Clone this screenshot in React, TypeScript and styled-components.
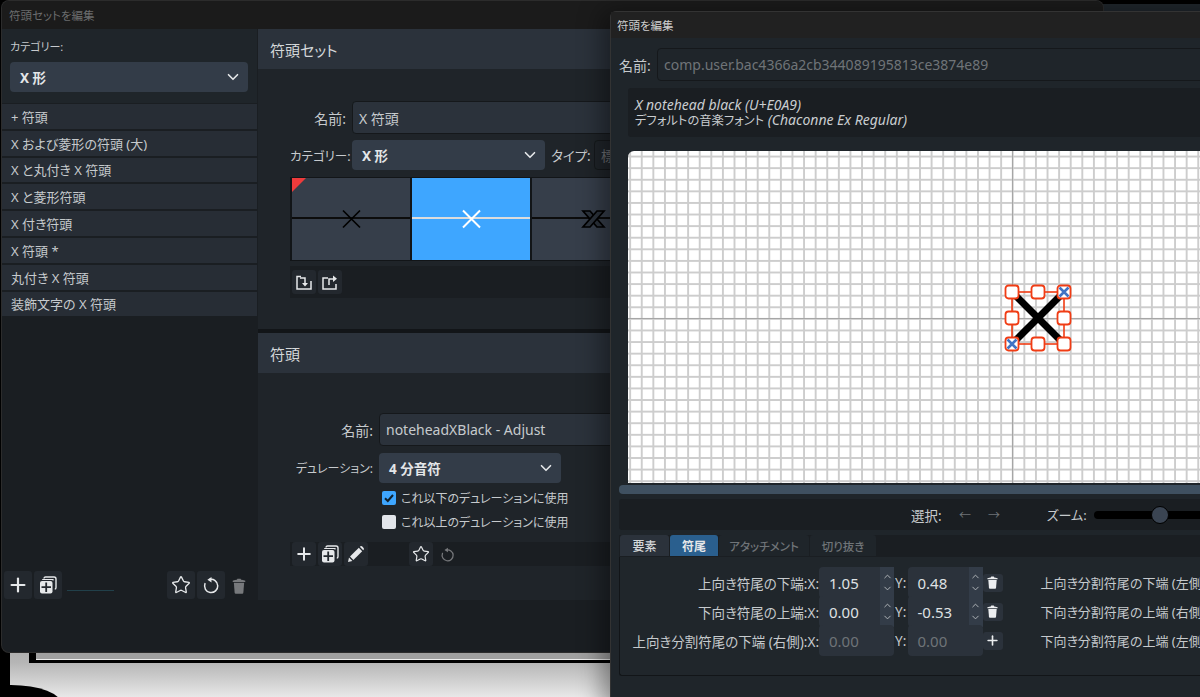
import React from "react";
import styled, { createGlobalStyle } from "styled-components";
import { ChevronDown, ChevronUp, Plus, Star } from "lucide-react";

const GlobalStyle = createGlobalStyle`
  html, body {
    margin: 0;
    background: #000;
    overflow: hidden;
  }
  * {
    box-sizing: border-box;
  }
`;

const categories = [
  "+ 符頭",
  "X および菱形の符頭 (大)",
  "X と丸付き X 符頭",
  "X と菱形符頭",
  "X 付き符頭",
  "X 符頭 *",
  "丸付き X 符頭",
  "装飾文字の X 符頭",
];

const stemRows = [
  { label: "上向き符尾の下端:", x: "1.05", y: "0.48", side: "上向き分割符尾の下端 (左側):", active: true },
  { label: "下向き符尾の上端:", x: "0.00", y: "-0.53", side: "下向き分割符尾の上端 (右側):", active: true },
  { label: "上向き分割符尾の下端 (右側):", x: "0.00", y: "0.00", side: "下向き分割符尾の上端 (左側):", active: false },
];

const TrashIcon = ({ size = 14 }: { size?: number }) => (
  <svg width={size} height={size} viewBox="0 0 14 14" fill="currentColor">
    <path d="M1.5 2.4 C3 1.7 4.5 1.6 5.2 1.5 L5.6 .6 H8.4 L8.8 1.5 C9.5 1.6 11 1.7 12.5 2.4 V3.4 H1.5 Z" />
    <path d="M2.5 4.2 H11.5 L10.8 13 C10.7 13.6 10.4 13.8 9.9 13.8 H4.1 C3.6 13.8 3.3 13.6 3.2 13 Z" />
  </svg>
);

const AddCopyIcon = () => (
  <svg width="18" height="18" viewBox="0 0 18 18" fill="none" stroke="currentColor">
    <path d="M5 2.5 C5 1.5 5.5 1 6.5 1 H15 C16 1 17 2 17 3 V11.5 C17 12.5 16.5 13 15.8 13" strokeWidth="1.4" />
    <path d="M3.2 3.5 H14 V4.5" strokeWidth="1.2" />
    <rect x="1" y="5" width="12.5" height="12.5" rx="2" fill="currentColor" stroke="none" />
    <path d="M7.2 6.5 V16 M2.5 11.2 H12" stroke="#23282e" strokeWidth="1.8" />
  </svg>
);

const UndoIcon = ({ size = 18 }: { size?: number }) => (
  <svg width={size} height={size} viewBox="0 0 18 18" fill="none" stroke="currentColor" strokeWidth="1.5">
    <path d="M7.5 3.6 A6.6 6.6 0 1 1 3 7.6" strokeLinecap="round" />
    <path d="M9.5 .9 L5.4 3.7 L9.5 6.4 Z" fill="currentColor" stroke="none" />
  </svg>
);

const ImportIcon = () => (
  <svg width="16" height="16" viewBox="0 0 16 16" fill="none" stroke="currentColor" strokeWidth="1.5">
    <path d="M5 2.5 H1 V15 H15 V7" />
    <path d="M4 4 H9 V10" />
    <path d="M6 9 L9 12.5 L12 9 Z" fill="currentColor" stroke="none" />
  </svg>
);

const ExportIcon = () => (
  <svg width="16" height="16" viewBox="0 0 16 16" fill="none" stroke="currentColor" strokeWidth="1.5">
    <path d="M6 4 H1 V15 H14 V10" />
    <path d="M7 11 V5 H12" />
    <path d="M11 1.5 L15 4.8 L11 8 Z" fill="currentColor" stroke="none" />
  </svg>
);

const PencilIcon = () => (
  <svg width="18" height="18" viewBox="0 0 18 18" fill="currentColor">
    <path d="M1 17 L2 12.6 L5.4 16 Z" />
    <path d="M3 11.6 L11.8 2.8 L15.2 6.2 L6.4 15 Z" />
    <path d="M12.8 1.8 C13.8 .8 14.6 .8 15.6 1.8 L16.2 2.4 C17.2 3.4 17.2 4.2 16.2 5.2 Z" />
  </svg>
);

const NoteCell = ({ selected, double }: { selected?: boolean; double?: boolean }) => {
  const ink = selected ? "#fff" : "#000";
  return (
    <svg width="100%" height="100%" viewBox="0 0 118 82">
      <rect x="0" y="39" width="118" height="2" fill={selected ? "#dcdcdc" : "#0c0c0c"} />
      {double ? (
        <g fill="#2b323b" stroke={ink} strokeWidth="1.7">
          <path d="M51 33 H58 L72 49 H65 Z" />
          <path d="M72 33 H65 L51 49 H58 Z" />
        </g>
      ) : (
        <path d="M51 32.5 L68 49.5 M68 32.5 L51 49.5" stroke={ink} strokeWidth={selected ? 2 : 1.7} />
      )}
    </svg>
  );
};

const GlyphHandles = () => {
  const handles = [
    [10, 10],
    [36, 10],
    [62, 10],
    [10, 36],
    [62, 36],
    [10, 62],
    [36, 62],
    [62, 62],
  ];
  return (
    <svg width="72" height="72" viewBox="0 0 72 72">
      <rect x="10" y="10" width="52" height="52" fill="none" stroke="#f03c14" strokeWidth="1.6" />
      <path d="M12 12 L60 60 M60 12 L12 60" stroke="#000" strokeWidth="7" />
      {handles.map(([x, y]) => (
        <rect key={`${x}-${y}`} x={x - 6.5} y={y - 6.5} width="13" height="13" rx="3" fill="#fff" stroke="#f03c14" strokeWidth="1.8" />
      ))}
      <path d="M57.5 5.5 L66.5 14.5 M66.5 5.5 L57.5 14.5 M5.5 57.5 L14.5 66.5 M14.5 57.5 L5.5 66.5" stroke="#3f73c4" strokeWidth="2.6" />
    </svg>
  );
};

export default function App() {
  return (
    <Desktop>
      <GlobalStyle />
      <ScorePage>
        <ScoreFrame />
        <ScoreBlob />
      </ScorePage>
      <FarWindow />

      <BackWindow>
        <BackTitle>符頭セットを編集</BackTitle>
        <BackBody>
          <Sidebar>
            <CategoryBox>
              <SidebarLabel>カテゴリー:</SidebarLabel>
              <Select $width={238}>
                X 形
                <ChevronDown size={18} strokeWidth={2.2} />
              </Select>
            </CategoryBox>
            <CategoryList>
              {categories.map((c) => (
                <CategoryRow key={c}>{c}</CategoryRow>
              ))}
            </CategoryList>
            <SidebarTools>
              <ToolButton $size={28}>
                <Plus size={22} strokeWidth={2.4} />
              </ToolButton>
              <ToolButton $size={28}>
                <AddCopyIcon />
              </ToolButton>
              <ProgressStub />
              <ToolButton $size={28}>
                <Star size={20} strokeWidth={1.6} />
              </ToolButton>
              <ToolButton $size={28}>
                <UndoIcon />
              </ToolButton>
              <MutedIcon>
                <TrashIcon size={16} />
              </MutedIcon>
            </SidebarTools>
          </Sidebar>

          <MainColumn>
            <Panel $height={300}>
              <PanelHeader>符頭セット</PanelHeader>
              <SetBody>
                <FormRow>
                  <FieldLabel $width={56}>名前:</FieldLabel>
                  <TextField>X 符頭</TextField>
                </FormRow>
                <FormRow>
                  <FieldLabel $width={56} $size={12.5}>カテゴリー:</FieldLabel>
                  <Select $width={193}>
                    X 形
                    <ChevronDown size={18} strokeWidth={2.2} />
                  </Select>
                  <TypeLabel>タイプ:</TypeLabel>
                  <TypeField>標準</TypeField>
                </FormRow>
                <CellStrip>
                  <Cell>
                    <CornerFlag />
                    <NoteCell />
                  </Cell>
                  <Cell $selected>
                    <NoteCell selected />
                  </Cell>
                  <Cell>
                    <NoteCell double />
                  </Cell>
                </CellStrip>
                <StripTools>
                  <ToolButton $size={24}>
                    <ImportIcon />
                  </ToolButton>
                  <ToolButton $size={24}>
                    <ExportIcon />
                  </ToolButton>
                </StripTools>
              </SetBody>
            </Panel>
            <Panel $height={267}>
              <PanelHeader>符頭</PanelHeader>
              <HeadBody>
                <FormRow>
                  <FieldLabel $width={83}>名前:</FieldLabel>
                  <TextField>noteheadXBlack - Adjust</TextField>
                </FormRow>
                <FormRow>
                  <FieldLabel $width={83} $size={12}>デュレーション:</FieldLabel>
                  <Select $width={182}>
                    4 分音符
                    <ChevronDown size={18} strokeWidth={2.2} />
                  </Select>
                </FormRow>
                <CheckList>
                  <CheckRow>
                    <CheckBox $checked>
                      <svg width="12" height="12" viewBox="0 0 12 12" fill="none" stroke="#10202c" strokeWidth="2">
                        <path d="M2 6.2 L4.8 9 L10 3" />
                      </svg>
                    </CheckBox>
                    これ以下のデュレーションに使用
                  </CheckRow>
                  <CheckRow>
                    <CheckBox />
                    これ以上のデュレーションに使用
                  </CheckRow>
                </CheckList>
                <HeadTools>
                  <ToolButton $size={24}>
                    <Plus size={20} strokeWidth={2.4} />
                  </ToolButton>
                  <ToolButton $size={24}>
                    <AddCopyIcon />
                  </ToolButton>
                  <ToolButton $size={24}>
                    <PencilIcon />
                  </ToolButton>
                  <ToolSpacer />
                  <ToolButton $size={24}>
                    <Star size={18} strokeWidth={1.6} />
                  </ToolButton>
                  <MutedIcon>
                    <UndoIcon size={15} />
                  </MutedIcon>
                </HeadTools>
              </HeadBody>
            </Panel>
          </MainColumn>
        </BackBody>
      </BackWindow>

      <EditWindow>
        <EditTitle>符頭を編集</EditTitle>
        <EditBody>
          <NameRow>
            <FieldLabel $width={31}>名前:</FieldLabel>
            <NameField>comp.user.bac4366a2cb344089195813ce3874e89</NameField>
          </NameRow>
          <InfoBox>
            <i>X notehead black (U+E0A9)</i>
            <span>
              <FontNote>デフォルトの音楽フォント</FontNote> <i>(Chaconne Ex Regular)</i>
            </span>
          </InfoBox>
          <Canvas>
            <Glyph>
              <GlyphHandles />
            </Glyph>
          </Canvas>
          <ScrollBar />
          <ViewBar>
            <span>選択:</span>
            <ArrowHint>←</ArrowHint>
            <ArrowHint>→</ArrowHint>
            <ZoomLabel>ズーム:</ZoomLabel>
            <ZoomTrack>
              <ZoomThumb />
            </ZoomTrack>
          </ViewBar>
          <Tabs>
            <Tab $width={49} $kind="plain">要素</Tab>
            <Tab $width={48} $kind="active">符尾</Tab>
            <Tab $width={90} $kind="dim">アタッチメント</Tab>
            <Tab $width={66} $kind="dim">切り抜き</Tab>
          </Tabs>
          <TabPane>
            {stemRows.map((r) => (
              <StemRow key={r.label}>
                <StemLabel>{r.label}X:</StemLabel>
                <NumberField $disabled={!r.active}>
                  {r.x}
                  {r.active && (
                    <Spinner>
                      <ChevronUp size={11} />
                      <ChevronDown size={11} />
                    </Spinner>
                  )}
                </NumberField>
                <AxisLabel>Y:</AxisLabel>
                <NumberField $disabled={!r.active}>
                  {r.y}
                  {r.active && (
                    <Spinner>
                      <ChevronUp size={11} />
                      <ChevronDown size={11} />
                    </Spinner>
                  )}
                </NumberField>
                <RowAction>{r.active ? <TrashIcon size={13} /> : <Plus size={15} strokeWidth={2.6} />}</RowAction>
                <SideLabel>{r.side}</SideLabel>
              </StemRow>
            ))}
          </TabPane>
        </EditBody>
      </EditWindow>
    </Desktop>
  );
}

const Desktop = styled.div`
  position: relative;
  width: 1200px;
  height: 697px;
  overflow: hidden;
  background: #000;
  color: #c6cacd;
  font-family: "Noto Sans", "Noto Sans CJK JP", sans-serif;
  font-size: 13.5px;
  font-feature-settings: "palt";
`;

const ScorePage = styled.div`
  position: absolute;
  left: 10px;
  right: 0;
  top: 640px;
  bottom: 0;
  background: linear-gradient(#a8a8a8 0%, #b6b6b6 40%, #e8e8e8 100%);
`;

const ScoreFrame = styled.div`
  position: absolute;
  left: 19px;
  right: 0;
  top: 0;
  height: 23px;
  background: #a0a0a0;
  border-left: 7px solid #000;
  border-bottom: 3px solid #000;
  box-shadow: inset 0 -1px 0 #eee;
`;

const ScoreBlob = styled.div`
  position: absolute;
  left: -50px;
  top: 45px;
  width: 102px;
  height: 40px;
  border-radius: 50%;
  background: #000;
`;

const FarWindow = styled.div`
  position: absolute;
  left: 1090px;
  right: 0;
  top: 4px;
  height: 10px;
  background: #1f262c;
`;

const BackWindow = styled.div`
  position: absolute;
  left: 2px;
  top: 1px;
  width: 1101px;
  height: 651px;
  display: flex;
  flex-direction: column;
  overflow: hidden;
  background: #1a1e22;
  border-radius: 7px;
  box-shadow: 0 0 0 1px #2c2c2c;
`;

const BackTitle = styled.div`
  height: 28px;
  flex: none;
  display: flex;
  align-items: center;
  padding-left: 7px;
  background: #1b1b1b;
  color: #6c6d6e;
  font-size: 11.5px;
`;

const BackBody = styled.div`
  display: flex;
  gap: 1px;
  height: 571px;
  flex: none;
`;

const Sidebar = styled.div`
  width: 255px;
  flex: none;
  display: flex;
  flex-direction: column;
  background: #1a1e22;
`;

const CategoryBox = styled.div`
  height: 74px;
  flex: none;
  padding: 8px 8px 0;
  background: #1f252a;
`;

const SidebarLabel = styled.div`
  height: 25px;
  font-size: 11px;
  line-height: 19px;
`;

const Select = styled.div<{ $width: number }>`
  width: ${(p) => p.$width}px;
  height: 30px;
  flex: none;
  display: flex;
  align-items: center;
  justify-content: space-between;
  padding: 0 6px 0 10px;
  border-radius: 4px;
  background: #333c48;
  color: #e4e6e8;
  font-weight: 700;
  font-size: 13.5px;
`;

const CategoryList = styled.div`
  display: flex;
  flex-direction: column;
  gap: 2px;
  padding-top: 1px;
  flex: 1;
`;

const CategoryRow = styled.div`
  height: 24.8px;
  display: flex;
  align-items: center;
  padding-left: 9px;
  background: #272d35;
  font-size: 13px;
`;

const SidebarTools = styled.div`
  height: 29px;
  flex: none;
  display: flex;
  align-items: flex-start;
  gap: 2px;
  padding-left: 2px;
`;

const ToolButton = styled.div<{ $size: number }>`
  width: ${(p) => p.$size}px;
  height: ${(p) => p.$size}px;
  flex: none;
  display: flex;
  align-items: center;
  justify-content: center;
  border-radius: 3px;
  background: #23282e;
  color: #e6e8ea;
`;

const ProgressStub = styled.div`
  width: 47px;
  height: 1px;
  margin: 19px 51px 0 3px;
  background: #21404a;
`;

const MutedIcon = styled.div`
  width: 24px;
  align-self: stretch;
  display: flex;
  align-items: center;
  justify-content: center;
  color: #77797c;
`;

const MainColumn = styled.div`
  flex: 1;
  display: flex;
  flex-direction: column;
  gap: 4px;
  background: #121518;
`;

const Panel = styled.div<{ $height: number }>`
  height: ${(p) => p.$height}px;
  flex: none;
  display: flex;
  flex-direction: column;
  background: #1f2429;
`;

const PanelHeader = styled.div`
  height: 40px;
  flex: none;
  display: flex;
  align-items: center;
  padding-left: 12px;
  background: #2b323b;
  color: #d4d7d9;
  font-size: 15px;
`;

const SetBody = styled.div`
  display: flex;
  flex-direction: column;
  gap: 6px;
  padding: 32px 0 0 32px;
`;

const HeadBody = styled.div`
  display: flex;
  flex-direction: column;
  gap: 7px;
  padding: 40px 0 0 32px;
`;

const FormRow = styled.div`
  display: flex;
  align-items: center;
  gap: 6px;
`;

const FieldLabel = styled.div<{ $width: number; $size?: number }>`
  width: ${(p) => p.$width}px;
  flex: none;
  text-align: right;
  white-space: nowrap;
  font-size: ${(p) => p.$size ?? 14}px;
`;

const TextField = styled.div`
  width: 500px;
  height: 33px;
  flex: none;
  display: flex;
  align-items: center;
  padding-left: 6px;
  border: 1px solid #15181b;
  border-radius: 4px;
  background: #2b323b;
  color: #c6cacd;
  font-size: 14px;
`;

const TypeLabel = styled.div`
  flex: none;
  width: 36px;
  white-space: nowrap;
`;

const TypeField = styled.div`
  width: 200px;
  height: 30px;
  flex: none;
  margin-left: 1px;
  display: flex;
  align-items: center;
  padding-left: 6px;
  border: 1px solid #15181b;
  border-radius: 4px;
  color: #6c6f72;
`;

const CellStrip = styled.div`
  display: flex;
  gap: 2px;
  height: 84px;
  margin-top: 1px;
  padding: 1px 0 1px 2px;
  background: #121518;
`;

const Cell = styled.div<{ $selected?: boolean }>`
  position: relative;
  width: 118px;
  flex: none;
  background: ${(p) => (p.$selected ? "#3ea6ff" : "#363e4a")};
  svg {
    display: block;
  }
`;

const CornerFlag = styled.div`
  position: absolute;
  left: 0;
  top: 0;
  width: 14px;
  height: 14px;
  background: #ee3b3b;
  clip-path: polygon(0 0, 100% 0, 0 100%);
`;

const StripTools = styled.div`
  display: flex;
  align-items: center;
  gap: 2px;
  height: 32px;
  margin-top: -1px;
  padding-left: 2px;
  background: #1a1e22;
`;

const CheckList = styled.div`
  display: flex;
  flex-direction: column;
  gap: 5px;
  margin-top: -2px;
  padding-left: 92px;
`;

const CheckRow = styled.div`
  height: 19px;
  display: flex;
  align-items: center;
  gap: 5px;
  font-size: 12px;
`;

const CheckBox = styled.div<{ $checked?: boolean }>`
  width: 14px;
  height: 14px;
  flex: none;
  display: flex;
  align-items: center;
  justify-content: center;
  border-radius: 2px;
  background: ${(p) => (p.$checked ? "#3ea6ff" : "#e2e5ea")};
`;

const HeadTools = styled.div`
  display: flex;
  align-items: center;
  gap: 2px;
  height: 24px;
  margin-top: 4px;
  padding-left: 2px;
  background: #1a1e22;
`;

const ToolSpacer = styled.div`
  width: 37px;
  flex: none;
`;

const EditWindow = styled.div`
  position: absolute;
  left: 610px;
  top: 11px;
  width: 700px;
  height: 700px;
  display: flex;
  flex-direction: column;
  background: #1f252a;
  border: 1px solid #333;
  border-radius: 6px 0 0 0;
  box-shadow: -8px 0 24px rgba(0, 0, 0, 0.4);
`;

const EditTitle = styled.div`
  height: 26px;
  flex: none;
  display: flex;
  align-items: center;
  padding-left: 6px;
  background: #212121;
  color: #cfcfcf;
  font-size: 11.5px;
`;

const EditBody = styled.div`
  display: flex;
  flex-direction: column;
  padding: 10px 0 0 8px;
`;

const NameRow = styled.div`
  display: flex;
  align-items: center;
  gap: 7px;
`;

const NameField = styled.div`
  flex: 1;
  height: 33px;
  display: flex;
  align-items: center;
  padding-left: 6px;
  border: 1px solid #15181b;
  border-radius: 4px;
  background: #1f252a;
  color: #6f7478;
  font-size: 14px;
`;

const InfoBox = styled.div`
  height: 49px;
  margin: 7px 0 0 9px;
  padding: 9px 7px;
  display: flex;
  flex-direction: column;
  border-radius: 3px;
  background: #1a1e22;
  color: #c9cdd0;
  line-height: 15px;
  font-size: 14px;
`;

const FontNote = styled.span`
  font-size: 12.3px;
`;

const Canvas = styled.div`
  position: relative;
  height: 332px;
  margin: 14px 0 0 9px;
  border-radius: 6px 0 0 0;
  background-color: #fff;
  background-image: linear-gradient(#a6a6a6, #a6a6a6), linear-gradient(#a6a6a6, #a6a6a6),
    linear-gradient(to right, #cdcdcd 1.6px, transparent 1.6px), linear-gradient(to bottom, #cdcdcd 1.6px, transparent 1.6px);
  background-size: 1px 100%, 100% 1px, 11.6px 11.6px, 11.6px 11.6px;
  background-position: 384px 0, 0 167px, 1.2px 0, 0 4.6px;
  background-repeat: no-repeat, no-repeat, repeat, repeat;
`;

const Glyph = styled.div`
  position: absolute;
  left: 374px;
  top: 131px;
  width: 72px;
  height: 72px;
`;

const ScrollBar = styled.div`
  height: 9px;
  margin-top: 2px;
  border-radius: 4px 0 0 4px;
  background: #3f5060;
`;

const ViewBar = styled.div`
  height: 31px;
  margin-top: 5px;
  display: flex;
  align-items: center;
  padding-left: 292px;
  border-radius: 3px;
  background: #1a1e22;
  white-space: nowrap;
`;

const ArrowHint = styled.span`
  width: 29px;
  flex: none;
  color: #6f7478;
  font-size: 12px;
  text-align: center;
  &:nth-child(2) {
    margin-left: 9px;
  }
`;

const ZoomLabel = styled.span`
  margin-left: 38px;
  font-size: 13px;
`;

const ZoomTrack = styled.div`
  position: relative;
  width: 300px;
  height: 8px;
  margin-left: 7px;
  border-radius: 4px;
  background: #000;
`;

const ZoomThumb = styled.div`
  position: absolute;
  left: 57px;
  top: -5px;
  width: 18px;
  height: 18px;
  border-radius: 50%;
  background: #3a4452;
  border: 1px solid #000;
`;

const Tabs = styled.div`
  display: flex;
  gap: 1px;
  height: 22px;
  margin-top: 5px;
  padding: 0 0 1px 1px;
  background: #1a1e22;
`;

const tabBg: Record<string, string> = { plain: "#2b323b", active: "#2a5f8e", dim: "#1f252a" };
const tabFg: Record<string, string> = { plain: "#d4d7d9", active: "#e4e6e8", dim: "#6f7478" };

const Tab = styled.div<{ $width: number; $kind: string }>`
  width: ${(p) => p.$width}px;
  flex: none;
  display: flex;
  align-items: center;
  justify-content: center;
  border-radius: 3px 3px 0 0;
  background: ${(p) => tabBg[p.$kind]};
  color: ${(p) => tabFg[p.$kind]};
  font-size: ${(p) => (p.$kind === "dim" ? 11.5 : 12)}px;
  font-weight: ${(p) => (p.$kind === "active" ? 700 : 500)};
`;

const TabPane = styled.div`
  height: 119px;
  padding-top: 11px;
  border-left: 1px solid #121518;
  border-bottom: 1px solid #121518;
  border-bottom-left-radius: 3px;
  background: #20262b;
`;

const StemRow = styled.div`
  height: 29px;
  display: flex;
  align-items: center;
`;

const StemLabel = styled.div`
  width: 199px;
  flex: none;
  text-align: right;
  white-space: nowrap;
`;

const NumberField = styled.div<{ $disabled?: boolean }>`
  position: relative;
  width: 75px;
  height: 31px;
  flex: none;
  display: flex;
  align-items: center;
  padding-left: 10px;
  border-radius: 4px;
  background: #2b323b;
  color: ${(p) => (p.$disabled ? "#6f7478" : "#dfe1e3")};
  font-size: 15px;
`;

const Spinner = styled.div`
  position: absolute;
  right: 0;
  top: 0;
  bottom: 0;
  width: 14px;
  display: flex;
  flex-direction: column;
  align-items: center;
  justify-content: center;
  gap: 1px;
  background: #333c48;
  color: #b8bcc0;
`;

const AxisLabel = styled.div`
  width: 13.5px;
  flex: none;
  text-align: center;
`;

const RowAction = styled.div`
  width: 20px;
  height: 18px;
  flex: none;
  display: flex;
  align-items: center;
  justify-content: center;
  border-radius: 3px;
  background: #2b323b;
  color: #eceef0;
`;

const SideLabel = styled.div`
  margin-left: 38px;
  white-space: nowrap;
  font-size: 13px;
`;
